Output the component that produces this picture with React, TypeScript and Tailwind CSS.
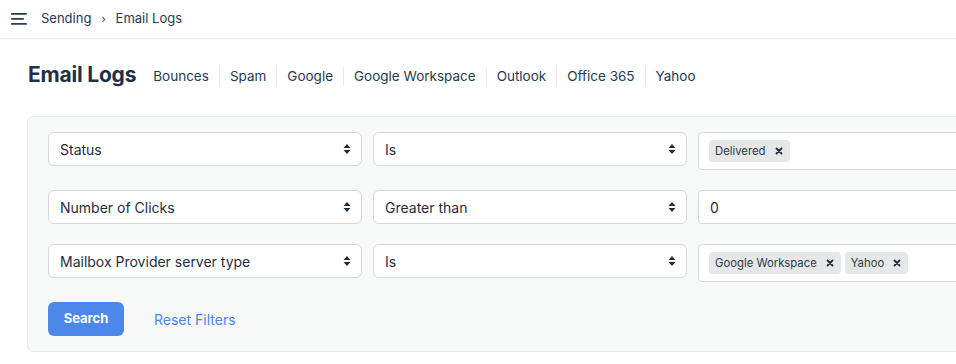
const tabs = ["Bounces", "Spam", "Google", "Google Workspace", "Outlook", "Office 365", "Yahoo"];

function Chevrons() {
  return (
    <svg width="8" height="12" viewBox="0 0 8 12" className="shrink-0">
      <path d="M4 1 L7.5 5 H0.5 Z" fill="#1f2d3d" />
      <path d="M4 11 L7.5 7 H0.5 Z" fill="#1f2d3d" />
    </svg>
  );
}

function Select({ value }: { value: string }) {
  return (
    <div className="h-[34px] flex items-center justify-between rounded-md border border-[#d5d9de] bg-white pl-[11px] pr-[10px] text-[14px] text-[#1f2d3d]">
      <span>{value}</span>
      <Chevrons />
    </div>
  );
}

function Tag({ label }: { label: string }) {
  return (
    <div className="h-[22px] flex items-center gap-[9px] rounded-sm bg-[#e6e7e8] pl-[6px] pr-[7px] text-[11.3px] text-[#2d3a48]">
      <span>{label}</span>
      <svg width="8" height="8" viewBox="0 0 8 8">
        <path d="M1.5 1.5 L6.5 6.5 M6.5 1.5 L1.5 6.5" stroke="#1f2d3d" strokeWidth="1.8" strokeLinecap="round" />
      </svg>
    </div>
  );
}

function TagField({ tags }: { tags: string[] }) {
  return (
    <div className="h-[38px] flex items-center gap-1 rounded-[4px] border border-[#d5d9de] bg-white px-[10px]">
      {tags.map((t) => (
        <Tag key={t} label={t} />
      ))}
    </div>
  );
}

export default function App() {
  return (
    <div className="w-[956px] h-[364px] overflow-hidden bg-white font-['Inter',sans-serif] text-[#1f2d3d]">
      <div className="h-[39px] flex items-center border-b border-[#ececee] pl-[11px]">
        <svg width="17" height="12" viewBox="0 0 17 12" className="mr-[13px]">
          <rect x="0" y="0" width="16" height="1.8" rx="0.9" fill="#243b53" />
          <rect x="0" y="5" width="13" height="1.8" rx="0.9" fill="#243b53" />
          <rect x="0" y="10" width="16" height="1.8" rx="0.9" fill="#243b53" />
        </svg>
        <span className="text-[13px] text-[#243b53]">Sending</span>
        <span className="mx-[10px] text-[11px] text-[#243b53]">›</span>
        <span className="text-[13px] text-[#243b53]">Email Logs</span>
      </div>

      <div className="flex items-center pl-[28px] mt-[21px] h-[30px]">
        <h1 className="text-[21px] font-bold text-[#1f2f46] tracking-[-0.2px] mr-[17px]">Email Logs</h1>
        <div className="flex items-center pt-[2px]">
          {tabs.map((t, i) => (
            <div
              key={t}
              className={`text-[13.5px] text-[#243b53] h-[19px] flex items-center ${i === 0 ? "pr-[10px]" : "px-[10px] border-l border-[#e6e8eb]"}`}
            >
              {t}
            </div>
          ))}
        </div>
      </div>

      <div className="mt-[26px] ml-[27px] w-[1010px] rounded-md border border-[#e8eaec] bg-[#f7f8f8] pl-[20px] pt-[15px] pb-[15px]">
        <div className="grid grid-cols-[314px_314px_314px] gap-x-[11px] gap-y-[20px] items-start">
          <Select value="Status" />
          <Select value="Is" />
          <TagField tags={["Delivered"]} />

          <Select value="Number of Clicks" />
          <Select value="Greater than" />
          <div className="h-[34px] flex items-center rounded-[4px] border border-[#d5d9de] bg-white px-[11px] text-[14px]">0</div>

          <Select value="Mailbox Provider server type" />
          <Select value="Is" />
          <TagField tags={["Google Workspace", "Yahoo"]} />
        </div>
        <div className="flex items-center mt-[20px]">
          <button className="h-[34px] w-[76px] rounded-md bg-[#4c87ea] text-white text-[13px] font-bold">Search</button>
          <span className="ml-[30px] text-[14px] text-[#4c87ea]">Reset Filters</span>
        </div>
      </div>
    </div>
  );
}
